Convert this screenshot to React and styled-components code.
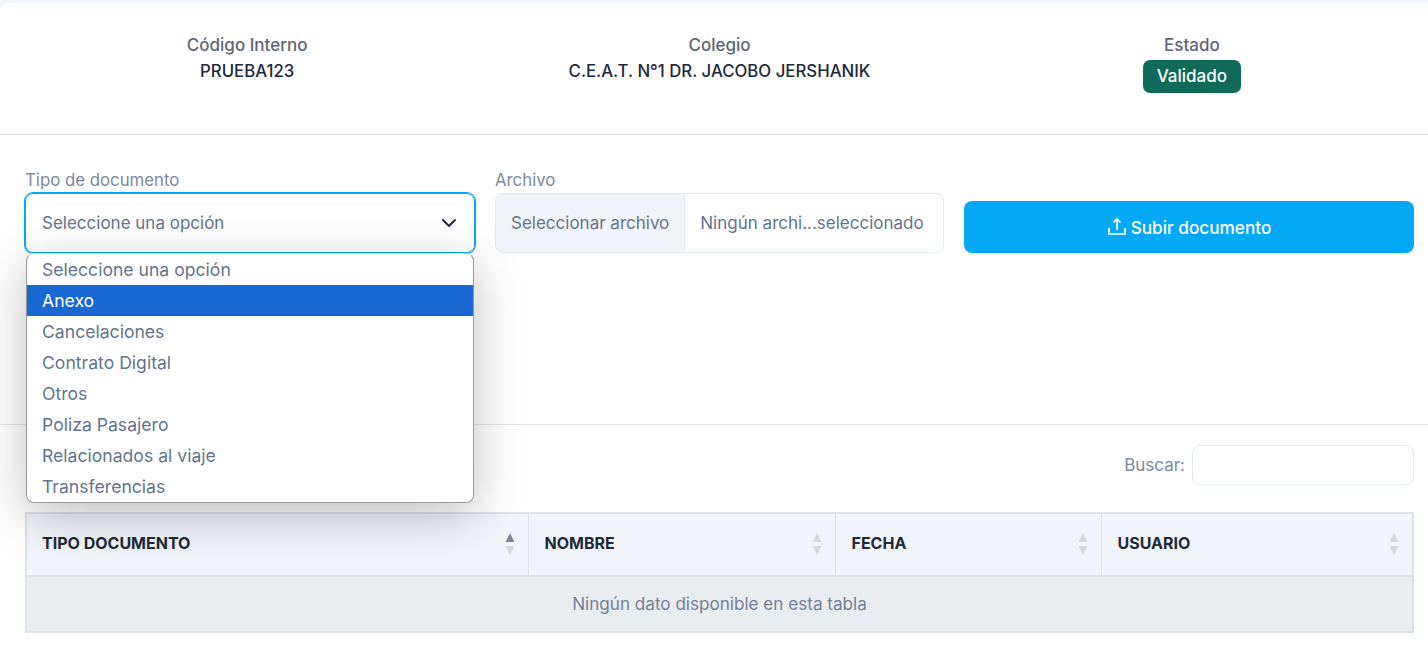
import { createGlobalStyle, styled } from "styled-components";
import { ChevronDown } from "lucide-react";

const GlobalStyle = createGlobalStyle`
  html, body {
    margin: 0;
    height: 100%;
    background: #f1f5f9;
    overflow: hidden;
  }
  body {
    font-family: "Inter", "Liberation Sans", sans-serif;
    font-size: 17px;
    color: #64748b;
  }
`;

const Page = styled.div`
  padding-top: 3px;
`;

const Card = styled.div`
  position: relative;
  height: 645px;
  background: #fff;
  border-radius: 8px 0 0 0;
`;

const Summary = styled.div`
  display: grid;
  grid-template-columns: repeat(3, 1fr);
  height: 131px;
  padding: 0 0 0 11px;
  border-bottom: 1px solid #e2e5e9;
`;

const SummaryItem = styled.div`
  display: flex;
  flex-direction: column;
  align-items: center;
  padding-top: 32px;
  line-height: 20px;
`;

const SummaryLabel = styled.div`
  height: 20px;
  font-weight: 500;
  color: #5f6672;
`;

const SummaryValue = styled.div`
  margin-top: 6px;
  font-size: 16.8px;
  font-weight: 500;
  color: #1e293b;
`;

const Badge = styled.span`
  margin-top: 5px;
  padding: 0 14px;
  height: 33px;
  line-height: 33px;
  border-radius: 7px;
  background: #0f6b58;
  color: #fff;
  font-weight: 500;
`;

const FormRow = styled.div`
  display: flex;
  align-items: flex-end;
  gap: 20px;
  padding: 34px 14px 0 25px;
`;

const Field = styled.div`
  display: flex;
  flex-direction: column;
  width: ${(p) => p.$width}px;
`;

const Label = styled.label`
  height: 24px;
  line-height: 22px;
  font-size: 16.8px;
  color: #7d8a9c;
`;

const SelectBox = styled.div`
  display: flex;
  align-items: center;
  justify-content: space-between;
  box-sizing: border-box;
  height: 60px;
  padding: 0 13px 0 16px;
  border: 1px solid #03a9f4;
  border-radius: 8px;
  box-shadow: 0 0 0 1px #03a9f4;
  color: #64748b;
`;

const FileBox = styled.div`
  display: flex;
  box-sizing: border-box;
  height: 60px;
  border: 1px solid #e2e8f0;
  border-radius: 8px;
  overflow: hidden;
  line-height: 58px;
  white-space: nowrap;
`;

const FileButton = styled.div`
  padding: 0 15px;
  background: #f1f5f9;
  border-right: 1px solid #e2e8f0;
`;

const FileName = styled.div`
  padding: 0 15px;
`;

const UploadButton = styled.button`
  display: flex;
  flex: 1;
  align-items: center;
  justify-content: center;
  gap: 4px;
  height: 52px;
  border: 0;
  border-radius: 8px;
  background: #03a9f4;
  color: #fff;
  font: 500 17.2px "Inter", sans-serif;
`;

const Menu = styled.ul`
  position: absolute;
  top: 250px;
  left: 26px;
  box-sizing: border-box;
  width: 448px;
  height: 250px;
  margin: 0;
  padding: 0;
  list-style: none;
  background: #fff;
  border: 1px solid #9a9a9a;
  border-top-color: #d5d5d5;
  border-radius: 8px;
  box-shadow: 0 12px 48px rgba(0, 0, 0, 0.25);
  z-index: 5;
`;

const MenuItem = styled.li`
  height: 31px;
  line-height: 32px;
  padding-left: 15px;
  font-size: 17.6px;
  background: ${(p) => (p.$active ? "#1967d2" : "transparent")};
  color: ${(p) => (p.$active ? "#fff" : "#64748b")};
`;

const Divider = styled.div`
  margin-top: 171px;
  border-top: 1px solid #e2e5e9;
`;

const SearchRow = styled.div`
  display: flex;
  justify-content: flex-end;
  align-items: center;
  gap: 7px;
  padding: 20px 14px 27px 0;
  color: #7d8a9c;
`;

const SearchInput = styled.div`
  box-sizing: border-box;
  width: 222px;
  height: 40px;
  border: 1px solid #e2e8f0;
  border-radius: 8px;
`;

const TableWrap = styled.div`
  padding: 0 14px 0 25px;
`;

const Table = styled.table`
  width: 100%;
  table-layout: fixed;
  border-collapse: collapse;
  border: 2px solid #dee2e6;
`;

const HeadCell = styled.th`
  position: relative;
  height: 63px;
  padding: 0 0 4px 16px;
  box-sizing: border-box;
  width: ${(p) => p.$width}px;
  background: #f1f5f9;
  border-right: 1px solid #dee2e6;
  border-bottom: 2px solid #dee2e6;
  text-align: left;
  font-size: 16px;
  font-weight: 700;
  color: #1e293b;

  &:first-child {
    padding-left: 15px;
  }
`;

const SortIcon = styled.svg`
  position: absolute;
  top: 18px;
  right: 13px;
`;

const EmptyCell = styled.td`
  height: 56px;
  padding: 0 0 2px;
  box-sizing: border-box;
  background: #e9edf0;
  text-align: center;
  font-size: 17.1px;
  color: #718096;
`;

const options = [
  "Seleccione una opción",
  "Anexo",
  "Cancelaciones",
  "Contrato Digital",
  "Otros",
  "Poliza Pasajero",
  "Relacionados al viaje",
  "Transferencias",
];

const columns = [
  { name: "TIPO DOCUMENTO", width: 502, sorted: true },
  { name: "NOMBRE", width: 307 },
  { name: "FECHA", width: 266 },
  { name: "USUARIO" },
];

const SortArrows = ({ sorted }) => (
  <SortIcon width="10" height="24" viewBox="0 0 10 24">
    <path d="M5 1l4.5 9h-9z" fill={sorted ? "#7c8698" : "#d5dae1"} />
    <path d="M5 23L.5 14h9z" fill="#d5dae1" />
  </SortIcon>
);

const UploadIcon = () => (
  <svg width="20" height="20" viewBox="0 0 20 20" fill="none" stroke="currentColor" strokeWidth="1.7">
    <path d="M2 11v6h16v-6" />
    <path d="M10 13V2" />
    <path d="M6.5 5.5L10 2l3.5 3.5" />
  </svg>
);

const App = () => {
  return (
    <Page>
      <GlobalStyle />
      <Card>
        <Summary>
          <SummaryItem>
            <SummaryLabel>Código Interno</SummaryLabel>
            <SummaryValue>PRUEBA123</SummaryValue>
          </SummaryItem>
          <SummaryItem>
            <SummaryLabel>Colegio</SummaryLabel>
            <SummaryValue>C.E.A.T. N°1 DR. JACOBO JERSHANIK</SummaryValue>
          </SummaryItem>
          <SummaryItem>
            <SummaryLabel>Estado</SummaryLabel>
            <Badge>Validado</Badge>
          </SummaryItem>
        </Summary>

        <FormRow>
          <Field $width={450}>
            <Label>Tipo de documento</Label>
            <SelectBox>
              Seleccione una opción
              <ChevronDown size={24} color="#1e293b" />
            </SelectBox>
          </Field>
          <Field $width={449}>
            <Label>Archivo</Label>
            <FileBox>
              <FileButton>Seleccionar archivo</FileButton>
              <FileName>Ningún archi...seleccionado</FileName>
            </FileBox>
          </Field>
          <UploadButton>
            <UploadIcon />
            Subir documento
          </UploadButton>
        </FormRow>

        <Menu>
          {options.map((option) => (
            <MenuItem key={option} $active={option === "Anexo"}>
              {option}
            </MenuItem>
          ))}
        </Menu>

        <Divider />

        <SearchRow>
          Buscar:
          <SearchInput />
        </SearchRow>

        <TableWrap>
          <Table>
            <thead>
              <tr>
                {columns.map((col) => (
                  <HeadCell key={col.name} $width={col.width}>
                    {col.name}
                    <SortArrows sorted={col.sorted} />
                  </HeadCell>
                ))}
              </tr>
            </thead>
            <tbody>
              <tr>
                <EmptyCell colSpan={4}>Ningún dato disponible en esta tabla</EmptyCell>
              </tr>
            </tbody>
          </Table>
        </TableWrap>
      </Card>
    </Page>
  );
};

export default App;
